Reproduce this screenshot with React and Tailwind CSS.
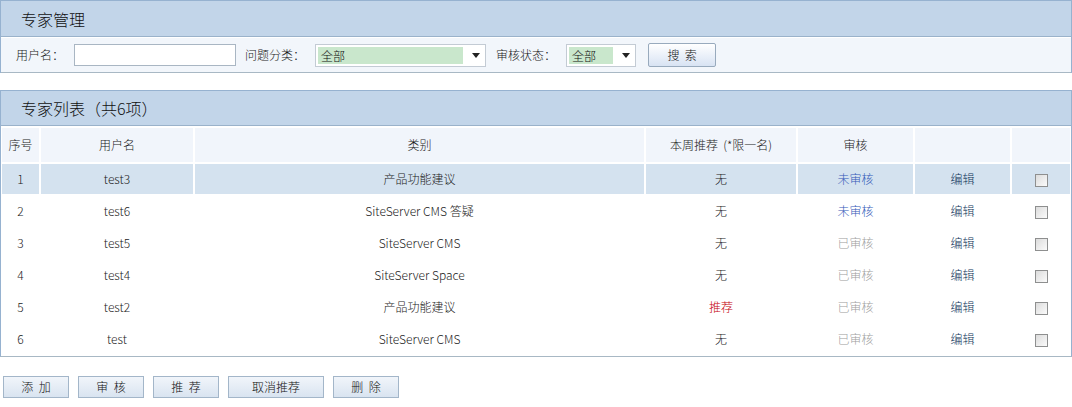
import { useState } from 'react';

const experts = [
  { id: 1, name: 'test3', category: '产品功能建议', featured: false, checked: false },
  { id: 2, name: 'test6', category: 'SiteServer CMS 答疑', featured: false, checked: false },
  { id: 3, name: 'test5', category: 'SiteServer CMS', featured: false, checked: true },
  { id: 4, name: 'test4', category: 'SiteServer Space', featured: false, checked: true },
  { id: 5, name: 'test2', category: '产品功能建议', featured: true, checked: true },
  { id: 6, name: 'test', category: 'SiteServer CMS', featured: false, checked: true },
];

function Arrow() {
  return (
    <svg width="8" height="5" viewBox="0 0 8 5" className="shrink-0">
      <path d="M0 0h8L4 5z" fill="#222" />
    </svg>
  );
}

function FakeSelect({ width, optionWidth, value }) {
  return (
    <div
      className="h-[23px] bg-white border border-[#c3cbd4] flex items-center pl-[2px] pr-[5px] justify-between"
      style={{ width }}
    >
      <div className="h-[17px] bg-[#c9e7cc] text-[#111] pl-[3px] leading-[17px]" style={{ width: optionWidth }}>
        {value}
      </div>
      <Arrow />
    </div>
  );
}

function Btn({ children, wide }) {
  return (
    <button
      className={`h-[22px] ${wide ? 'w-[96px]' : 'w-[66px]'} border border-[#a3b6c9] bg-gradient-to-b from-[#f1f5fa] to-[#d9e4f0] text-[#111] text-[12px] leading-[20px] whitespace-pre`}
    >
      {children}
    </button>
  );
}

function CheckBox() {
  return (
    <span className="inline-block w-[13px] h-[13px] border border-[#8e8f8f] bg-gradient-to-br from-[#dcdcdc] to-[#fbfbfb] align-middle" />
  );
}

export default function App() {
  const [selected] = useState(1);

  return (
    <div className="w-[1072px] h-[407px] bg-white text-[12px] text-[#1a1a1a] font-light font-['Noto_Sans_CJK_SC','Noto_Sans',sans-serif]">
      {/* 查询面板 */}
      <div className="border-l border-r border-t border-[#96b2d0]">
        <div className="h-[36px] bg-[#c2d5e9] border-b border-[#9ab2ca] flex items-center pl-[20px] text-[16px] text-[#111]">
          专家管理
        </div>
        <div className="h-[36px] bg-[#f2f6fb] border-t border-white border-b border-b-[#a8b8c4] flex items-center pl-[15px]">
          <span>用户名：</span>
          <input className="ml-[10px] w-[162px] h-[22px] border border-[#a9b6c3] bg-white outline-none" />
          <span className="ml-[9px]">问题分类：</span>
          <div className="ml-[10px]">
            <FakeSelect width={171} optionWidth={145} value="全部" />
          </div>
          <span className="ml-[10px]">审核状态：</span>
          <div className="ml-[10px]">
            <FakeSelect width={70} optionWidth={44} value="全部" />
          </div>
          <button className="ml-[12px] w-[68px] h-[24px] border border-[#98aabd] rounded-[2px] bg-gradient-to-b from-white to-[#d8e3f3] text-[#111] whitespace-pre">
            {'搜  索'}
          </button>
        </div>
      </div>

      {/* 列表面板 */}
      <div className="mt-[17px] border-l border-r border-t border-b border-[#96b2d0] border-b-[#a8b8c4]">
        <div className="h-[35px] bg-[#c2d5e9] border-b border-[#9ab2ca] flex items-center pl-[20px] text-[16px] text-[#111]">
          专家列表（共6项）
        </div>
        <table className="border-separate border-spacing-[2px] -mx-[1px] table-fixed" style={{ width: 'calc(100% + 2px)' }}>
          <colgroup>
            <col className="w-[37px]" />
            <col className="w-[152px]" />
            <col className="w-[449px]" />
            <col className="w-[150px]" />
            <col className="w-[115px]" />
            <col className="w-[95px]" />
            <col />
          </colgroup>
          <thead>
            <tr className="h-[34px] bg-[#f1f5fb]">
              <th className="font-light text-center">序号</th>
              <th className="font-light">用户名</th>
              <th className="font-light">类别</th>
              <th className="font-light whitespace-pre">
                {'本周推荐  (*限一名)'}
              </th>
              <th className="font-light">审核</th>
              <th className="font-light"></th>
              <th className="font-light"></th>
            </tr>
          </thead>
          <tbody>
            {experts.map((e) => (
              <tr key={e.id} className={`h-[30px] ${e.id === selected ? 'bg-[#d4e2ef]' : 'bg-white'}`}>
                <td className="text-center">{e.id}</td>
                <td className="text-center">{e.name}</td>
                <td className="text-center">{e.category}</td>
                <td className="text-center">
                  {e.featured ? <span className="text-[#c4000a]">推荐</span> : '无'}
                </td>
                <td className="text-center">
                  {e.checked ? (
                    <span className="text-[#a0a0a0]">已审核</span>
                  ) : (
                    <span className="text-[#3359b8]">未审核</span>
                  )}
                </td>
                <td className="text-center text-[#0c3358]">编辑</td>
                <td className="text-center">
                  <CheckBox />
                </td>
              </tr>
            ))}
          </tbody>
        </table>
      </div>

      {/* 批量操作 */}
      <div className="mt-[19px] pl-[3px] flex gap-[9px]">
        <Btn>{'添  加'}</Btn>
        <Btn>{'审  核'}</Btn>
        <Btn>{'推  荐'}</Btn>
        <Btn wide>取消推荐</Btn>
        <Btn>{'删  除'}</Btn>
      </div>
    </div>
  );
}
